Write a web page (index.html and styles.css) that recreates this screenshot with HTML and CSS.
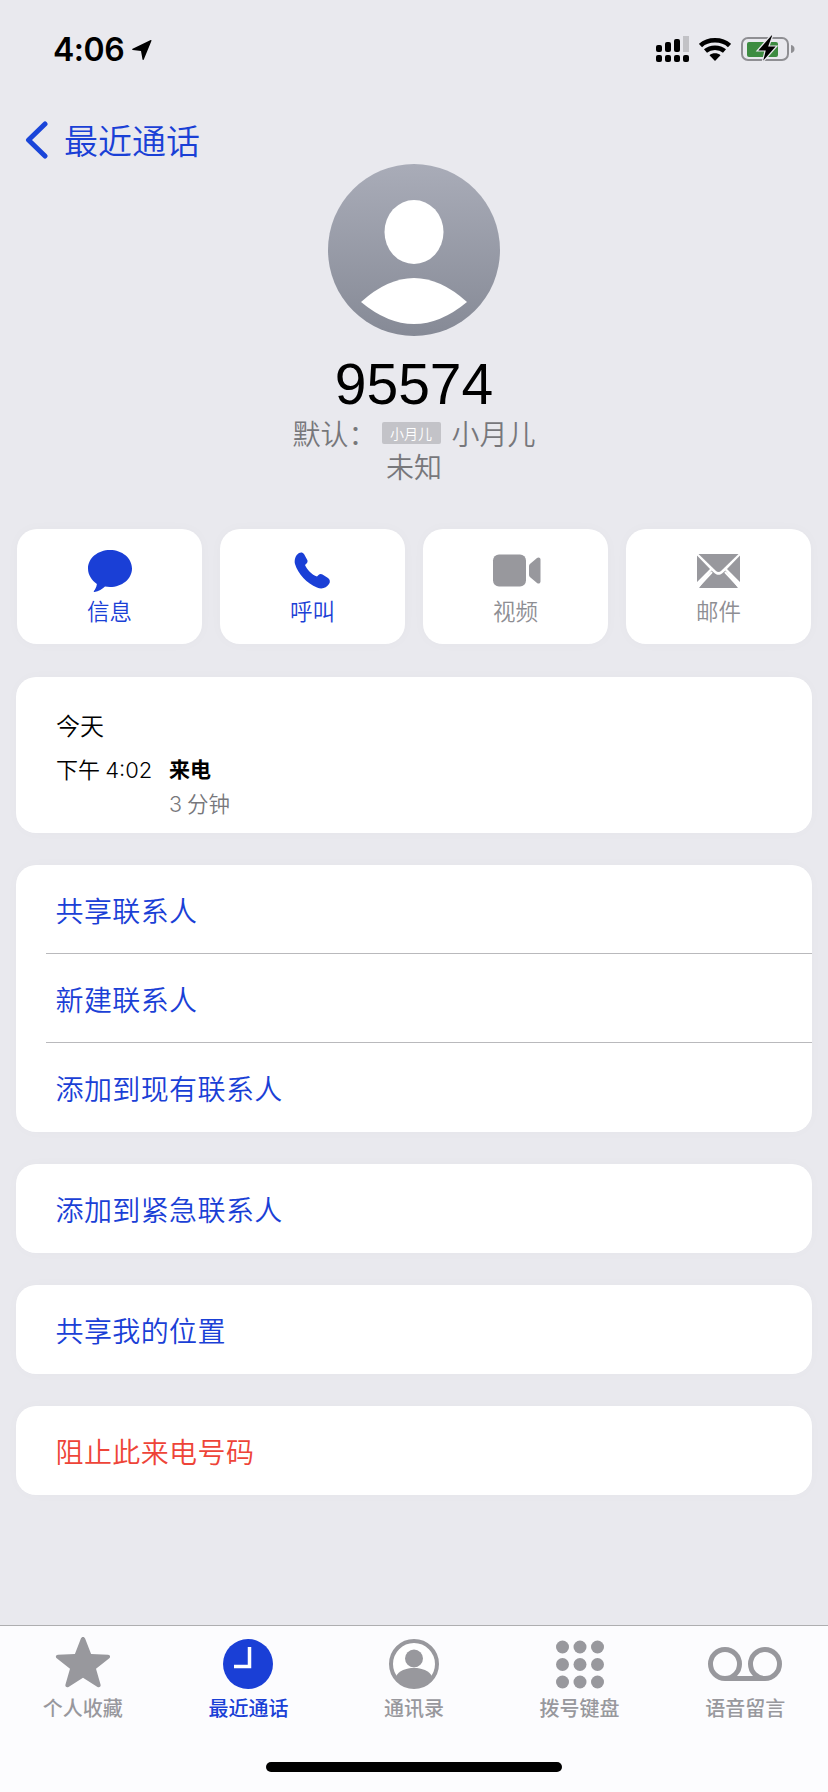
FILE: index.html
```html
<!DOCTYPE html>
<html lang="zh-CN">
<head>
<meta charset="utf-8">
<title>95574</title>
<link rel="stylesheet" href="styles.css">
</head>
<body>
<div class="phone">
  <main class="content">
    <header class="status">
      <div class="status-left">
        <span class="time">4:06</span>
        <svg class="loc" width="20" height="20" viewBox="0 0 20 20"><path d="M19.5 .8 11.800 19.600c-.3.6-1.200.5-1.300-.1L9 11 .7 9.900c-.7-.1-.7-1-.1-1.200L18.700.1c.5-.2 1 .2.8.7Z"/></svg>
      </div>
      <div class="status-right">
        <svg width="33" height="26" viewBox="0 0 33 26"><rect x="0" y="9" width="6" height="7" rx="2"/><rect x="9" y="6" width="6" height="10" rx="2"/><rect x="18" y="3" width="6" height="13" rx="2"/><rect x="27" y="0" width="6" height="16" fill="#c2c2c6"/><rect x="0" y="19" width="6" height="7" rx="2"/><rect x="9" y="19" width="6" height="7" rx="2"/><rect x="18" y="19" width="6" height="7" rx="2"/><rect x="27" y="19" width="6" height="7" rx="2"/></svg>
        <svg width="32" height="24" viewBox="0 0 32 24"><path d="M1.500 8.500C9 1.500 23 1.500 30.500 8.500" fill="none" stroke="#000" stroke-width="4.500"/><path d="M6.500 14C11.500 9.500 20.500 9.500 25.500 14" fill="none" stroke="#000" stroke-width="4.500"/><path d="M10.500 18.300C13.500 15.700 18.500 15.700 21.500 18.300L16 24Z"/></svg>
        <svg width="54" height="28" viewBox="0 0 54 28"><rect x="1" y="3" width="46" height="22" rx="6" fill="none" stroke="#8f8f93" stroke-width="2"/><rect x="6" y="7" width="31" height="15" rx="2" fill="#3d8c41"/><path d="M50 10c2.500.5 3.500 2 3.500 4s-1 3.500-3.500 4Z" fill="#8f8f93"/><path d="M30 0 16 16h8l-3 12 15-17h-8l4-11Z" stroke="#e9e9ee" stroke-width="1.200"/></svg>
      </div>
    </header>

    <nav class="back">
      <svg class="chev" width="24" height="38" viewBox="0 0 24 38"><path d="M20 3 3.500 19 20 35" fill="none" stroke="#1a45d9" stroke-width="5" stroke-linecap="round" stroke-linejoin="round"/></svg>
      <span>最近通话</span>
    </nav>

    <section class="hero">
      <svg class="avatar" width="172" height="172" viewBox="0 0 172 172">
        <defs><linearGradient id="ag" x1="0" y1="0" x2="0" y2="1"><stop offset="0" stop-color="#a9acb8"/><stop offset="1" stop-color="#868a96"/></linearGradient></defs>
        <circle cx="86" cy="86" r="86" fill="url(#ag)"/>
        <ellipse cx="86" cy="68" rx="29.500" ry="32" fill="#fff"/>
        <path d="M33 138Q86 90 139 138 86 182 33 138Z" fill="#fff"/>
      </svg>
      <h1 class="number">95574</h1>
      <div class="sub">
        <span>默认：</span><span class="sim">小月儿</span><span>小月儿</span>
      </div>
      <div class="sub unknown">未知</div>
    </section>

    <section class="actions">
      <div class="action on">
        <svg width="44" height="42" viewBox="0 0 44 42"><path d="M22 0C34 0 44 8 44 18.500S34 37 22 37c-2 0-3.500-.2-5-.5-2.500 2.500-6.500 4.800-10.500 5.500-.8.100-1-.6-.6-1.100 1.300-1.500 2.600-4 3-7C3.800 30.500 0 25 0 18.500 0 8 10 0 22 0Z" fill="#1a3fd6"/></svg>
        <span>信息</span>
      </div>
      <div class="action on">
        <svg width="37" height="38" viewBox="0 0 37 38"><path d="M5 1C7 0 9 .5 10 2l3 5.500c1 1.500.5 3-.5 4L11 13c1.500 4 7 10 12 11.500l1.500-1.500c1-1 2.500-1.500 4-.5l5.500 3.500c2 1.500 2.500 4 1 6-2.500 4-7 5.500-12 3.500C13 31.500 4 22 1 12 0 8 1.500 3 5 1Z" fill="#1a3fd6"/></svg>
        <span>呼叫</span>
      </div>
      <div class="action">
        <svg width="51" height="33" viewBox="-3 0 51 33"><rect width="33" height="32" rx="6" fill="#98989d"/><path d="M36 11.500c0-1 .4-1.700 1.200-2.300L44 3.500c1.500-1.200 3.500-.4 3.500 1.500v22c0 1.900-2 2.700-3.500 1.500l-6.800-5.700c-.8-.6-1.200-1.300-1.200-2.300Z" fill="#98989d"/></svg>
        <span>视频</span>
      </div>
      <div class="action">
        <svg width="43" height="34" viewBox="0 0 43 34"><path d="M1.500 0h40L24 17c-1.500 1.400-3.500 1.400-5 0Z" fill="#98989d"/><path d="M0 1.500 13 15 0 28ZM43 1.500 30 15l13 13ZM2 34l12.500-17.500 3.500 3c2 1.800 5 1.800 7 0l3.500-3L41 34Z" fill="#98989d"/><path d="M1 33 15 18M42 33 28 18" stroke="#fff" stroke-width="2"/></svg>
        <span>邮件</span>
      </div>
    </section>

    <section class="card history">
      <div class="day">今天</div>
      <div class="call">
        <span class="when">下午 4:02</span>
        <div class="info">
          <span class="dir">来电</span>
          <span class="dur">3 分钟</span>
        </div>
      </div>
    </section>

    <section class="card">
      <div class="row">共享联系人</div>
      <div class="row">新建联系人</div>
      <div class="row">添加到现有联系人</div>
    </section>
    <section class="card"><div class="row">添加到紧急联系人</div></section>
    <section class="card"><div class="row">共享我的位置</div></section>
    <section class="card"><div class="row danger">阻止此来电号码</div></section>
  </main>

  <footer class="tabbar">
    <div class="tabs">
      <div class="tab">
        <svg width="56" height="54" viewBox="0 0 56 54"><path transform="translate(0 -1) scale(1 .98)" d="M28 2c1 0 1.700.6 2.100 1.600l6 15.900 17 .7c2 .1 2.700 2.400 1.200 3.600L41 34.400l4.600 16.400c.5 1.900-1.500 3.300-3.100 2.200L28 43.600 13.500 53c-1.600 1.100-3.600-.3-3.100-2.200L15 34.400 1.700 23.800C.2 22.600.9 20.300 2.900 20.200l17-.7 6-15.900C26.300 2.600 27 2 28 2Z" fill="#98989d"/></svg>
        <span>个人收藏</span>
      </div>
      <div class="tab on">
        <svg width="56" height="54" viewBox="0 0 56 54"><circle cx="28" cy="28" r="25" fill="#1a3fd6"/><path d="M29.500 11v19.500H14" fill="none" stroke="#fff" stroke-width="3.500"/></svg>
        <span>最近通话</span>
      </div>
      <div class="tab">
        <svg width="56" height="54" viewBox="0 0 56 54"><circle cx="28" cy="28" r="23" fill="#fff" stroke="#98989d" stroke-width="4"/><circle cx="28" cy="22.500" r="9" fill="#98989d"/><path d="M9.500 41C13 34.500 20 32 28 32s15 2.500 18.500 9C42 48 35.500 50.500 28 50.500S14 48 9.500 41Z" fill="#98989d"/></svg>
        <span>通讯录</span>
      </div>
      <div class="tab">
        <svg width="56" height="54" viewBox="0 0 56 54" fill="#98989d"><circle cx="10.500" cy="11" r="6.500"/><circle cx="28" cy="11" r="6.500"/><circle cx="45.500" cy="11" r="6.500"/><circle cx="10.500" cy="28.500" r="6.500"/><circle cx="28" cy="28.500" r="6.500"/><circle cx="45.500" cy="28.500" r="6.500"/><circle cx="10.500" cy="46" r="6.500"/><circle cx="28" cy="46" r="6.500"/><circle cx="45.500" cy="46" r="6.500"/></svg>
        <span>拨号键盘</span>
      </div>
      <div class="tab">
        <svg width="76" height="54" viewBox="0 0 76 54"><circle cx="18" cy="28" r="14.500" fill="none" stroke="#98989d" stroke-width="5"/><circle cx="58" cy="28" r="14.500" fill="none" stroke="#98989d" stroke-width="5"/><path d="M18 42.500h40" stroke="#98989d" stroke-width="5"/></svg>
        <span>语音留言</span>
      </div>
    </div>
    <div class="home"></div>
  </footer>
</div>
</body>
</html>
```
FILE: styles.css
```css
* { box-sizing: border-box; }
html, body { margin: 0; padding: 0; }
body {
  background: #e9e9ee;
  font-family: "Noto Sans CJK SC", "Liberation Sans", sans-serif;
  color: #000;
}
.phone {
  width: 828px;
  height: 1792px;
  display: flex;
  flex-direction: column;
  overflow: hidden;
}
.content { flex: 1; display: flex; flex-direction: column; }

.status {
  height: 100px;
  padding: 30px 33px 0 53px;
  display: flex;
  justify-content: space-between;
  align-items: flex-start;
}
.status-left { display: flex; align-items: center; gap: 8px; }
.time {
  font-family: Inter, "Liberation Sans", sans-serif;
  font-size: 32px;
  font-weight: 600;
  letter-spacing: -.5px;
  line-height: 40px;
}
.status-right { display: flex; align-items: center; gap: 10px; padding-top: 5px; }

.back {
  height: 64px;
  padding: 16px 0 0 25px;
  display: flex;
  align-items: center;
  gap: 15px;
  color: #1a40d6;
  font-size: 34px;
  font-weight: 350;
  line-height: 44px;
}

.hero { display: flex; flex-direction: column; align-items: center; }
.avatar { display: block; }
.number {
  margin: 16px 0 0;
  font-family: "Liberation Sans", sans-serif;
  font-size: 57px;
  font-weight: 400;
  line-height: 64px;
}
.sub {
  display: flex;
  align-items: center;
  color: #77777b;
  font-size: 28px;
  font-weight: 350;
  line-height: 34px;
  height: 34px;
}
.sim {
  width: 59px;
  height: 22px;
  margin: 0 11px 0 5px;
  border-radius: 2px;
  background: #c3c3c8;
  color: #fff;
  font-size: 14px;
  line-height: 22px;
  text-align: center;
}
.unknown { margin-top: -1px; }

.actions {
  margin-top: 46px;
  padding: 0 17px;
  display: grid;
  grid-template-columns: repeat(4, 185px);
  gap: 18px;
}
.action {
  height: 115px;
  padding-top: 21px;
  background: #fff;
  border-radius: 20px;
  box-shadow: 0 0 14px rgba(0, 0, 0, .025);
  display: flex;
  flex-direction: column;
  align-items: center;
  color: #8e8e93;
  font-size: 22.5px;
  font-weight: 350;
  line-height: 30px;
}
.action svg { display: block; height: 42px; margin-bottom: 3px; }
.action.on { color: #1a40d6; }

.card {
  margin: 32px 16px 0;
  background: #fff;
  border-radius: 20px;
  overflow: hidden;
  box-shadow: 0 0 14px rgba(0, 0, 0, .02);
}
.history { margin-top: 33px; height: 156px; padding: 30px 40px 0; }
.day { font-size: 24px; font-weight: 350; line-height: 36px; }
.call { display: flex; margin-top: 9px; }
.when {
  width: 113px;
  margin-top: 2px;
  font-family: Inter, "Noto Sans CJK SC", sans-serif;
  font-size: 22px;
  font-weight: 350;
  word-spacing: -1px;
  line-height: 32px;
}
.info { display: flex; flex-direction: column; }
.dir { font-size: 21px; font-weight: 700; line-height: 32px; }
.dur {
  font-family: Inter, "Noto Sans CJK SC", sans-serif;
  font-size: 21.5px;
  font-weight: 350;
  word-spacing: -1px;
  line-height: 40px;
  color: #77777b;
}

.row {
  height: 89px;
  padding-left: 39.500px;
  display: flex;
  align-items: center;
  color: #1a40d6;
  font-size: 28px;
  font-weight: 350;
  letter-spacing: .4px;
  position: relative;
}
.row + .row::before {
  content: "";
  position: absolute;
  left: 30px;
  right: 0;
  top: -1px;
  height: 1px;
  background: #b9b9bc;
}
.danger { color: #ee4438; }

.tabbar {
  height: 167px;
  background: #fcfcfe;
  border-top: 1px solid #aeaeb0;
  display: flex;
  flex-direction: column;
}
.tabs {
  display: grid;
  grid-template-columns: repeat(5, 1fr);
  padding-top: 10px;
}
.tab {
  display: flex;
  flex-direction: column;
  align-items: center;
  color: #98989d;
  font-size: 20px;
  line-height: 30px;
  font-weight: 500;
}
.tab svg { display: block; margin-bottom: 3px; }
.tab.on { color: #1a40d6; }
.home {
  width: 296px;
  height: 10px;
  margin: 39px auto 0;
  border-radius: 5px;
  background: #000;
}
```
